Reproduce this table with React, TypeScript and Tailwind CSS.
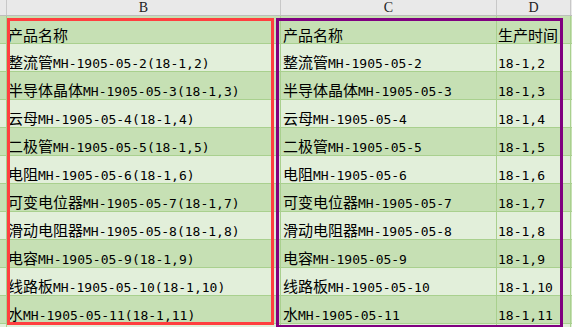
const rows: [string, string, string][] = [
  ["产品名称", "产品名称", "生产时间"],
  ["整流管MH-1905-05-2(18-1,2)", "整流管MH-1905-05-2", "18-1,2"],
  ["半导体晶体MH-1905-05-3(18-1,3)", "半导体晶体MH-1905-05-3", "18-1,3"],
  ["云母MH-1905-05-4(18-1,4)", "云母MH-1905-05-4", "18-1,4"],
  ["二极管MH-1905-05-5(18-1,5)", "二极管MH-1905-05-5", "18-1,5"],
  ["电阻MH-1905-05-6(18-1,6)", "电阻MH-1905-05-6", "18-1,6"],
  ["可变电位器MH-1905-05-7(18-1,7)", "可变电位器MH-1905-05-7", "18-1,7"],
  ["滑动电阻器MH-1905-05-8(18-1,8)", "滑动电阻器MH-1905-05-8", "18-1,8"],
  ["电容MH-1905-05-9(18-1,9)", "电容MH-1905-05-9", "18-1,9"],
  ["线路板MH-1905-05-10(18-1,10)", "线路板MH-1905-05-10", "18-1,10"],
  ["水MH-1905-05-11(18-1,11)", "水MH-1905-05-11", "18-1,11"],
  ["", "", ""],
];

// split CJK runs from latin runs so each gets its own font and size
function CellText({ text }: { text: string }) {
  const parts = text.match(/[\u4e00-\u9fff]+|[^\u4e00-\u9fff]+/g) ?? [];
  return (
    <span className="whitespace-nowrap">
      {parts.map((p, i) =>
        /[\u4e00-\u9fff]/.test(p) ? (
          <span key={i} className="font-['Noto_Sans_CJK_SC',sans-serif] text-[15px]">
            {p}
          </span>
        ) : (
          <span key={i} className="font-['DejaVu_Sans_Mono',monospace] text-[13px]">
            {p}
          </span>
        )
      )}
    </span>
  );
}

export default function App() {
  return (
    <div className="relative w-[572px] h-[327px] overflow-hidden bg-white text-black">
      {/* column headers */}
      <div className="flex h-[16px] bg-[#e9e9e9] border-b border-[#bdbdbd] font-['Liberation_Serif',serif] text-[14px] leading-[15px] text-[#222]">
        <div className="w-[7px] shrink-0 border-r border-[#c8c8c8]" />
        <div className="w-[274px] shrink-0 border-r border-[#c8c8c8] text-center">B</div>
        <div className="w-[216px] shrink-0 border-r border-[#c8c8c8] text-center">C</div>
        <div className="w-[74px] shrink-0 border-r border-[#c8c8c8] text-center">D</div>
        <div className="flex-1" />
      </div>

      {/* body rows */}
      {rows.map((r, i) => (
        <div
          key={i}
          className={`flex h-[28px] ${i % 2 === 0 ? "bg-[#c6e0b4]" : "bg-[#e2efda]"}`}
        >
          <div className="w-[7px] shrink-0 border-r border-b border-[#a9d08e]" />
          <div className="w-[274px] shrink-0 border-r border-b border-[#a9d08e] flex items-end pl-[1px] leading-[15px] overflow-hidden">
            <CellText text={r[0]} />
          </div>
          <div className="w-[216px] shrink-0 border-r border-b border-[#a9d08e] flex items-end pl-[2px] leading-[15px] overflow-hidden">
            <CellText text={r[1]} />
          </div>
          <div className="w-[74px] shrink-0 border-r border-b border-[#a9d08e] flex items-end pl-[1px] leading-[15px] overflow-hidden">
            <CellText text={r[2]} />
          </div>
          <div className="flex-1 border-b border-[#a9d08e]" />
        </div>
      ))}

      {/* selection outlines */}
      <div className="absolute left-[7px] top-[18px] w-[267px] h-[307px] border-[3px] border-[#ff3f3f]" />
      <div className="absolute left-[276px] top-[18px] w-[287px] h-[310px] border-[3px] border-[#800080]" />
    </div>
  );
}
